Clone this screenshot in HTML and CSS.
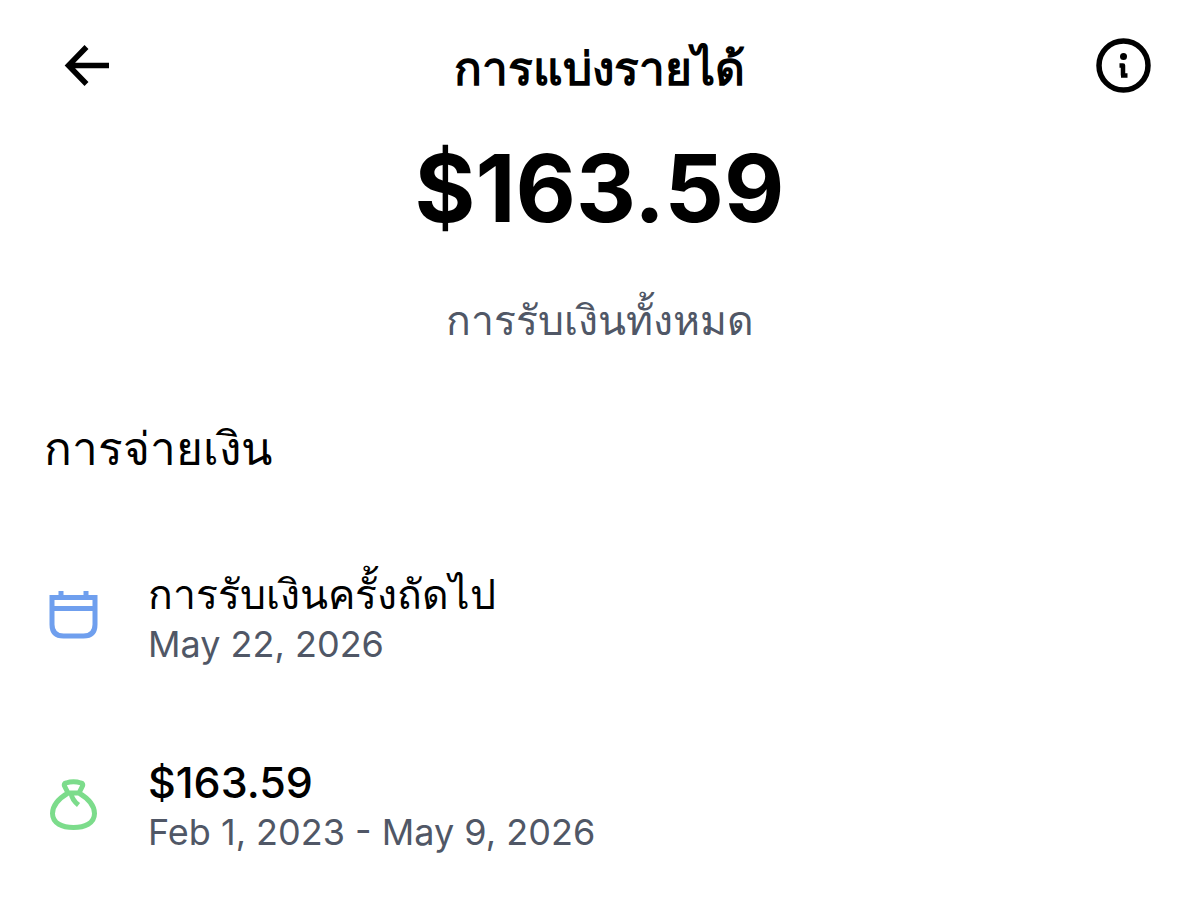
FILE: index.html
```html
<!DOCTYPE html>
<html lang="th">
<head>
    <meta charset="UTF-8">
    <meta name="viewport" content="width=device-width, initial-scale=1.0">
    <title>การแบ่งรายได้</title>
    <link rel="stylesheet" href="styles.css">
</head>
<body>
    <header class="topbar">
        <button class="icon-button back" type="button" aria-label="Back">
            <svg class="back-icon" viewBox="0 0 48 44" fill="none" stroke="currentColor" stroke-width="5.500">
                <path d="M22.500 3 4.500 21.500l18 18.500M4.500 21.500H45"/>
            </svg>
        </button>
        <h1 class="title">การแบ่งรายได้</h1>
        <button class="icon-button info" type="button" aria-label="Info">
            <svg class="info-icon" viewBox="0 0 56 56" fill="none" stroke="currentColor" stroke-width="5.500">
                <circle cx="28.500" cy="27.500" r="24.500"/>
                <path d="M24.500 27.500h3.500v10M26 37.500h6.500" stroke-width="4.500" stroke-linejoin="round"/>
                <circle cx="28.500" cy="18.500" r="3.500" fill="currentColor" stroke="none"/>
            </svg>
        </button>
    </header>

    <main>
        <section class="total">
            <p class="amount">$163.59</p>
            <p class="caption">การรับเงินทั้งหมด</p>
        </section>

        <section class="payouts">
            <h2 class="heading">การจ่ายเงิน</h2>
            <ul class="list">
                <li class="row">
                    <svg class="row-icon calendar" viewBox="0 0 60 60" fill="none" stroke="currentColor" stroke-width="5">
                        <path d="M8 9.500h43v27q0 11.500-11.500 11.500h-20Q8 48 8 36.500zM8 20.500h43M17 3v6M42 3v6"/>
                    </svg>
                    <div>
                        <p class="row-title">การรับเงินครั้งถัดไป</p>
                        <p class="row-date">May 22, 2026</p>
                    </div>
                </li>
                <li class="row">
                    <svg class="row-icon bag" viewBox="0 0 60 60" fill="none" stroke="currentColor" stroke-width="5" stroke-linejoin="round">
                        <path d="M24 17 20.500 10Q19.500 7.500 22 7q7.500-2.500 15 0 2.500.5 1.500 3L35 17zM24 17C14 23 8.500 30 8.500 37.500c0 10 10 14 21 14s21-4 21-14C50.500 30 45 23 35 17M27 17q1 7 7.500 12"/>
                    </svg>
                    <div>
                        <p class="row-title row-amount">$163.59</p>
                        <p class="row-date">Feb 1, 2023 - May 9, 2026</p>
                    </div>
                </li>
            </ul>
        </section>
    </main>
</body>
</html>
```
FILE: styles.css
```css
* {
    margin: 0;
    padding: 0;
    box-sizing: border-box;
}

body {
    background: #fff;
    color: #000;
    font-family: Inter, "Noto Sans", "Liberation Sans", sans-serif;
}

.topbar {
    display: grid;
    grid-template-columns: 1fr auto 1fr;
    align-items: center;
    height: 132px;
    padding: 0 48px;
}

.icon-button {
    display: flex;
    align-items: center;
    height: 72px;
    border: 0;
    background: none;
    color: #000;
    cursor: pointer;
}

.back {
    justify-self: start;
    padding-left: 16px;
}

.info { justify-self: end; }

.back-icon { width: 48px; height: 44px; }
.info-icon { width: 56px; height: 56px; }

.title {
    padding-top: 4px;
    font-size: 46px;
    line-height: 64px;
    font-weight: 700;
}

.total { text-align: center; }

.amount {
    font-size: 93px;
    line-height: 112px;
    font-weight: 700;
}

.caption {
    margin-top: 44px;
    font-size: 41px;
    line-height: 64px;
    color: #505766;
}

.payouts { padding: 64px 44px 0; }

.heading {
    font-size: 46px;
    line-height: 64px;
    font-weight: 500;
}

.list {
    display: flex;
    flex-direction: column;
    gap: 88px;
    margin-top: 88px;
    list-style: none;
}

.row {
    display: flex;
    align-items: center;
    gap: 44px;
}

.row-icon { width: 60px; height: 60px; }
.calendar { color: #6f9fee; }
.bag { color: #7cdc8b; }

.row-title {
    font-size: 41px;
    line-height: 52px;
    font-weight: 500;
}

.row-amount { font-size: 43px; }

.row-date {
    font-size: 36px;
    line-height: 48px;
    color: #505766;
}
```
